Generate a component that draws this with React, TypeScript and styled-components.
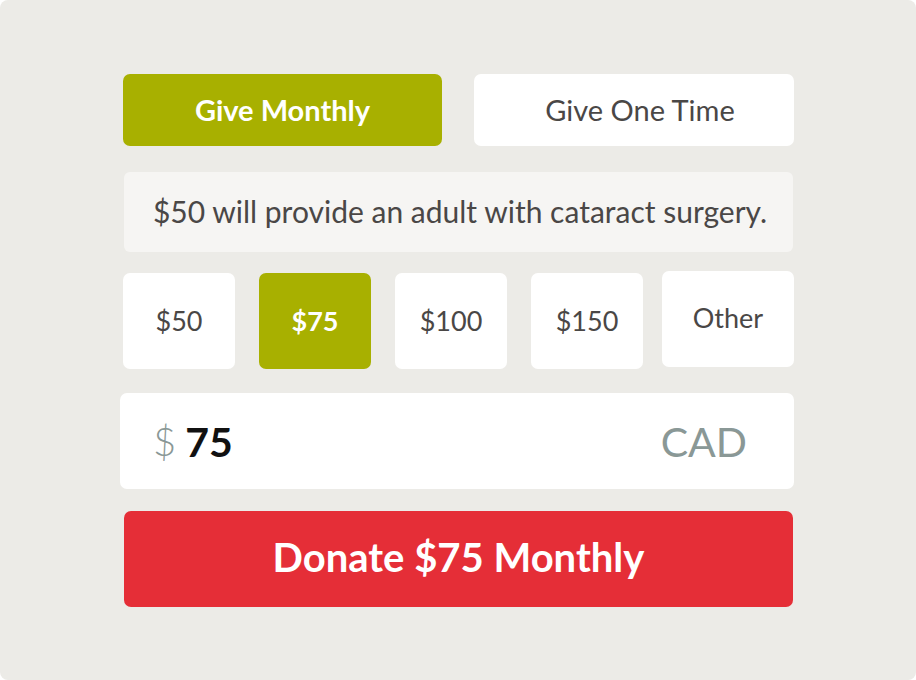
import React from "react";
import styled, { createGlobalStyle } from "styled-components";

const Global = createGlobalStyle`
  html, body { margin: 0; padding: 0; background: #ffffff; }
  body { font-family: Lato, "Open Sans", sans-serif; }
`;

const Page = styled.div`
  width: 916px;
  height: 680px;
  box-sizing: border-box;
  background: #ecebe7;
  border-radius: 8px;
  padding: 74px 0 0 120px;
  display: flex;
  flex-direction: column;
  align-items: flex-start;
`;

const Form = styled.div`
  width: 674px;
  display: flex;
  flex-direction: column;
`;

const Tabs = styled.div`
  display: flex;
  justify-content: space-between;
  padding: 0 0 0 3px;
`;

const Tab = styled.button<{ $active?: boolean }>`
  width: ${(p) => (p.$active ? "319px" : "320px")};
  height: 72px;
  border: none;
  border-radius: 7px;
  background: ${(p) => (p.$active ? "#a8b000" : "#ffffff")};
  color: ${(p) => (p.$active ? "#ffffff" : "#4a4746")};
  font-family: Lato, sans-serif;
  font-size: 29px;
  font-weight: ${(p) => (p.$active ? 700 : 400)};
  padding: 0 0 2px ${(p) => (p.$active ? "0" : "12px")};
  cursor: pointer;
`;

const Info = styled.div`
  margin: 26px 1px 0 4px;
  height: 80px;
  border-radius: 6px;
  background: #f6f5f3;
  color: #4a4746;
  font-size: 30px;
  display: flex;
  align-items: center;
  justify-content: center;
  padding: 0 0 2px 3px;
  box-sizing: border-box;
  white-space: nowrap;
`;

const Amounts = styled.div`
  margin-top: 21px;
  display: flex;
  align-items: flex-start;
  padding-left: 3px;
`;

const Amount = styled.button<{ $active?: boolean; $wide?: boolean; $gap?: number }>`
  flex: none;
  width: ${(p) => (p.$wide ? "132px" : "112px")};
  height: 96px;
  margin-right: ${(p) => (p.$gap ?? 24)}px;
  margin-top: ${(p) => (p.$wide ? "-2px" : "0")};
  border: none;
  border-radius: 7px;
  background: ${(p) => (p.$active ? "#a8b000" : "#ffffff")};
  color: ${(p) => (p.$active ? "#ffffff" : "#4a4746")};
  font-family: Lato, sans-serif;
  font-size: 27px;
  font-weight: ${(p) => (p.$active ? 700 : 400)};
  padding: 0 0 ${(p) => (p.$wide ? "4px" : "2px")} 0;
  cursor: pointer;
`;

const InputRow = styled.div`
  margin-top: 24px;
  height: 96px;
  border-radius: 7px;
  background: #ffffff;
  display: flex;
  align-items: center;
  padding: 0 47px 0 33px;
`;

const Currency = styled.span`
  color: #8a9896;
  font-size: 40px;
  font-weight: 300;
  margin-right: 9px;
`;

const Value = styled.span`
  color: #111111;
  font-size: 41px;
  font-weight: 700;
  flex: 1;
`;

const Code = styled.span`
  color: #8a9896;
  font-size: 41px;
  font-weight: 400;
`;

const Donate = styled.button`
  margin: 22px 1px 0 4px;
  height: 96px;
  border: none;
  border-radius: 7px;
  background: #e52e37;
  color: #ffffff;
  font-family: Lato, sans-serif;
  font-size: 40px;
  font-weight: 700;
  padding: 0 0 4px;
  cursor: pointer;
`;

export default function App() {
  return (
    <>
      <Global />
      <Page>
        <Form>
          <Tabs>
            <Tab $active>Give Monthly</Tab>
            <Tab>Give One Time</Tab>
          </Tabs>
          <Info>$50 will provide an adult with cataract surgery.</Info>
          <Amounts>
            <Amount>$50</Amount>
            <Amount $active>$75</Amount>
            <Amount>$100</Amount>
            <Amount $gap={19}>$150</Amount>
            <Amount $wide $gap={0}>Other</Amount>
          </Amounts>
          <InputRow>
            <Currency>$</Currency>
            <Value>75</Value>
            <Code>CAD</Code>
          </InputRow>
          <Donate>Donate $75 Monthly</Donate>
        </Form>
      </Page>
    </>
  );
}
